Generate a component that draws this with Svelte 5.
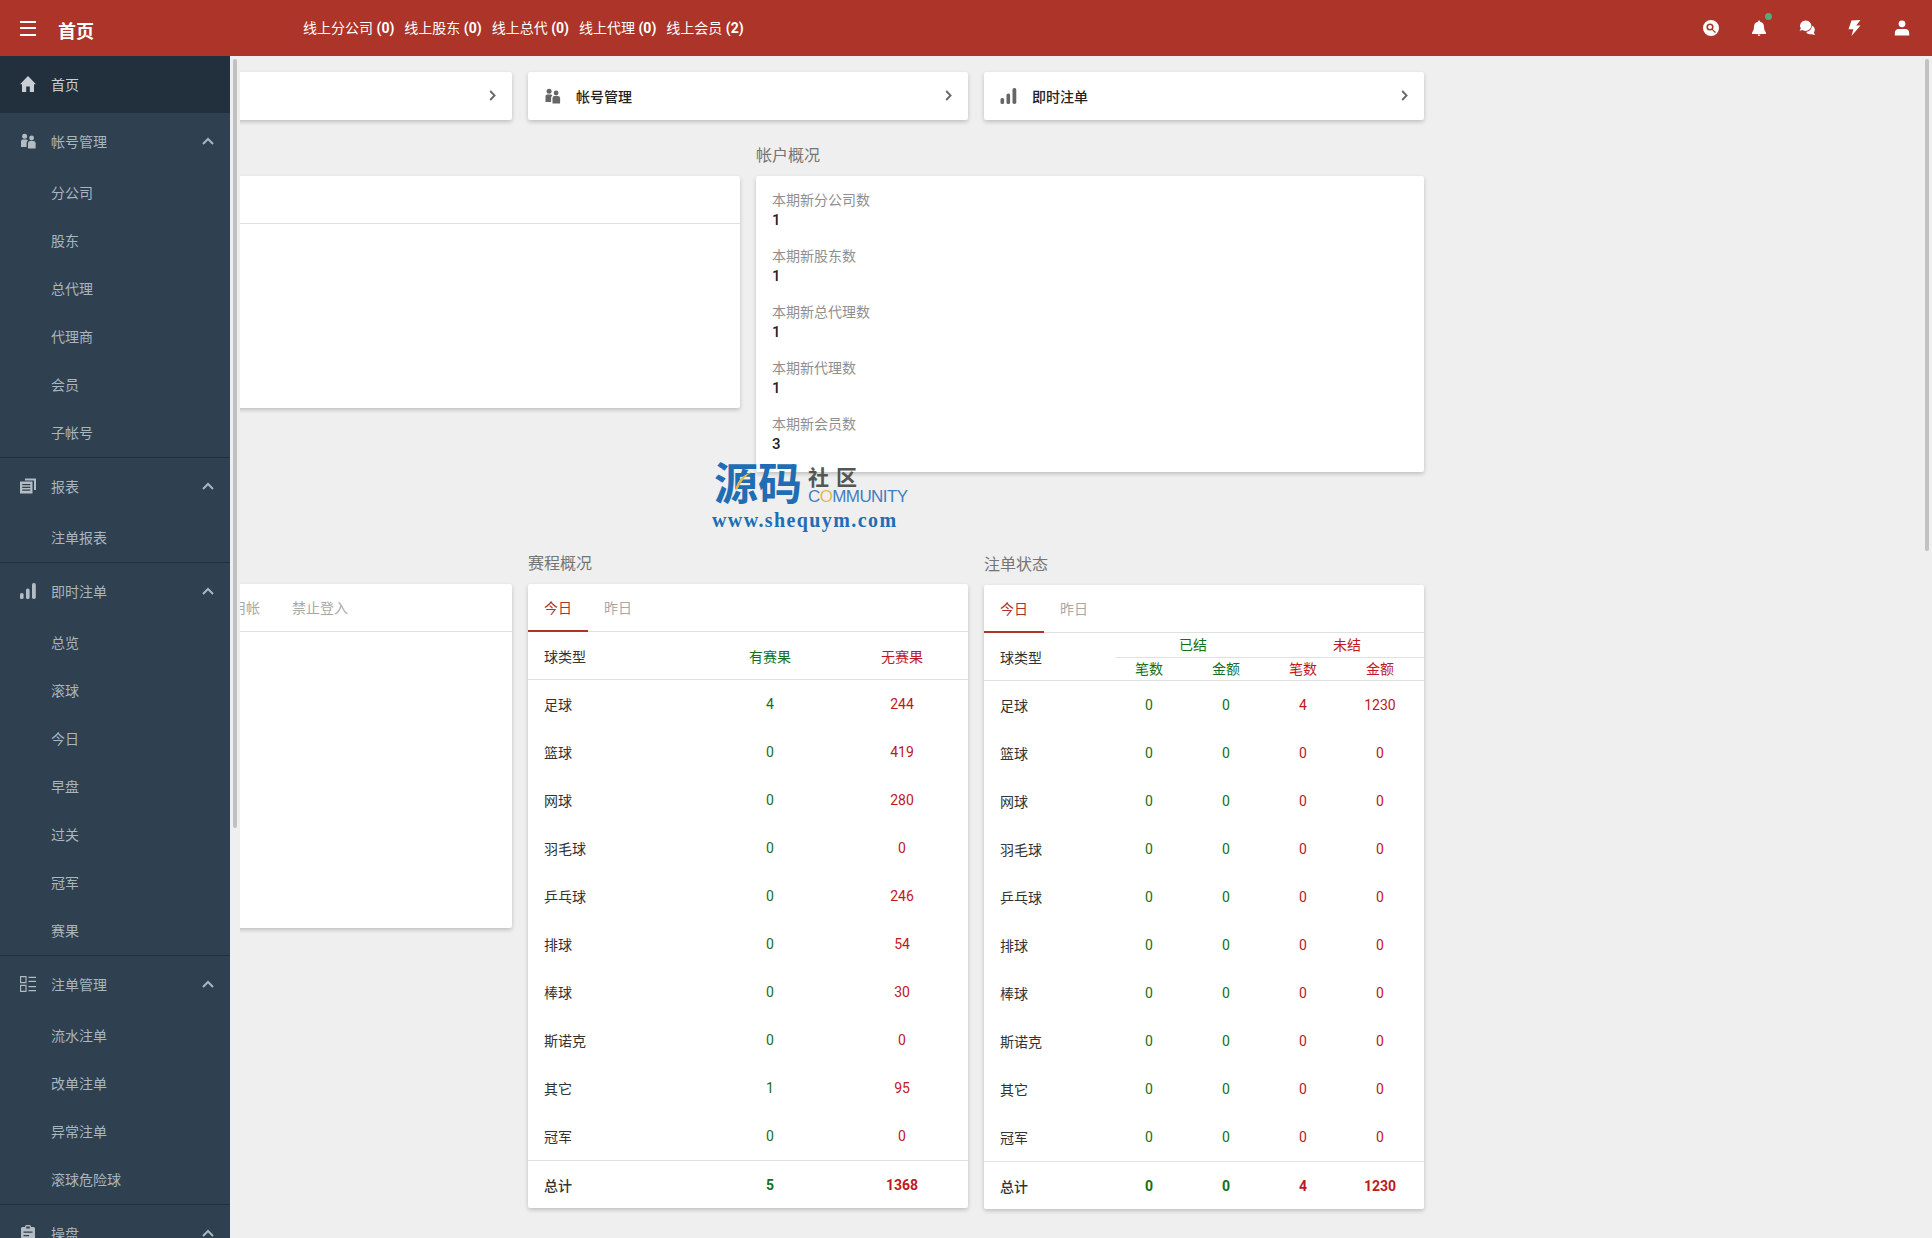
<script>
  const online = [
    { name: '线上分公司', n: 0 },
    { name: '线上股东', n: 0 },
    { name: '线上总代', n: 0 },
    { name: '线上代理', n: 0 },
    { name: '线上会员', n: 2 }
  ];

  const menu = [
    { name: '帐号管理', icon: 'users', subs: ['分公司', '股东', '总代理', '代理商', '会员', '子帐号'] },
    { name: '报表', icon: 'docs', subs: ['注单报表'] },
    { name: '即时注单', icon: 'bars', subs: ['总览', '滚球', '今日', '早盘', '过关', '冠军', '赛果'] },
    { name: '注单管理', icon: 'list', subs: ['流水注单', '改单注单', '异常注单', '滚球危险球'] },
    { name: '操盘', icon: 'clip', subs: [] }
  ];

  const stats = [
    { label: '本期新分公司数', value: 1 },
    { label: '本期新股东数', value: 1 },
    { label: '本期新总代理数', value: 1 },
    { label: '本期新代理数', value: 1 },
    { label: '本期新会员数', value: 3 }
  ];

  const games = [
    ['足球', 4, 244], ['篮球', 0, 419], ['网球', 0, 280], ['羽毛球', 0, 0], ['乒乓球', 0, 246],
    ['排球', 0, 54], ['棒球', 0, 30], ['斯诺克', 0, 0], ['其它', 1, 95], ['冠军', 0, 0]
  ];

  const bets = [
    ['足球', 0, 0, 4, 1230], ['篮球', 0, 0, 0, 0], ['网球', 0, 0, 0, 0], ['羽毛球', 0, 0, 0, 0], ['乒乓球', 0, 0, 0, 0],
    ['排球', 0, 0, 0, 0], ['棒球', 0, 0, 0, 0], ['斯诺克', 0, 0, 0, 0], ['其它', 0, 0, 0, 0], ['冠军', 0, 0, 0, 0]
  ];
</script>

{#snippet icon(name)}
  <svg class="icon" viewBox="0 0 16 16" fill="currentColor">
    {#if name === 'home'}
      <path d="M8 0 L16 8.2 H14 V16 H9.8 V10.5 H6.2 V16 H2 V8.2 H0 Z" />
    {:else if name === 'users'}
      <circle cx="4.6" cy="3.2" r="2.5" />
      <circle cx="11.6" cy="5" r="2.4" />
      <path d="M1 8.2 Q1 6.4 3 6.4 H6.2 Q7.6 6.4 7.9 7.6 Q6.6 8.4 6.6 10 V14 H1 Z" />
      <path d="M8 10.2 Q8 8 10 8 H13.2 Q15.6 8 15.6 10.2 V15.6 H8 Z" />
    {:else if name === 'docs'}
      <path d="M5 0.5 H16 V12 H14 V2.5 H5 Z" />
      <path fill-rule="evenodd" d="M0 3.5 H12.5 V15.5 H0 Z M2.2 6 V7.2 H10.3 V6 Z M2.2 8.8 V10 H10.3 V8.8 Z M2.2 11.6 V12.8 H10.3 V11.6 Z" />
    {:else if name === 'bars'}
      <rect x="0" y="10" width="3.6" height="6" rx="1.6" />
      <rect x="6" y="5.5" width="3.6" height="10.5" rx="1.6" />
      <rect x="12" y="0" width="3.8" height="16" rx="1.7" />
    {:else if name === 'list'}
      <path fill="none" stroke="currentColor" stroke-width="1.1" d="M0.6 0.6 H6 V6.6 H0.6 Z M0.6 9.4 H6 V15.4 H0.6 Z" />
      <path fill="none" stroke="currentColor" stroke-width="1.2" d="M8.5 1.4 H16 M8.5 5.4 H16 M8.5 10.6 H16 M8.5 14.6 H16" />
    {:else if name === 'clip'}
      <path fill-rule="evenodd" d="M5 1.5 Q5 0 6.5 0 H9.5 Q11 0 11 1.5 V2 H13.5 Q15 2 15 3.5 V16 H1 V3.5 Q1 2 2.5 2 H5 Z M6.2 1.6 V3.4 H9.8 V1.6 Z M3.5 6.5 V7.8 H12.5 V6.5 Z M3.5 10 V11.3 H9 V10 Z" />
    {:else if name === 'search'}
      <path fill-rule="evenodd" d="M8 0 A8 8 0 1 1 8 16 A8 8 0 1 1 8 0 Z M7 3.4 A3.6 3.6 0 1 0 7 10.6 A3.6 3.6 0 1 0 7 3.4 Z M7 5 A2 2 0 1 1 7 9 A2 2 0 1 1 7 5 Z M9.9 9.4 L9.2 10.2 L12 13 L13 12 Z" />
    {:else if name === 'bell'}
      <path d="M8 0.5 A1.2 1.2 0 0 1 9.2 1.7 Q13 2.6 13 7 Q13 11 15 12.8 V14 H1 V12.8 Q3 11 3 7 Q3 2.6 6.8 1.7 A1.2 1.2 0 0 1 8 0.5 Z M6.6 14.6 H9.4 Q9.4 16 8 16 Q6.6 16 6.6 14.6 Z" />
    {:else if name === 'chat'}
      <path d="M6.5 0.5 A5.6 5.2 0 1 1 3.6 10 L0.6 10.8 L1.8 8.4 A5.6 5.2 0 0 1 6.5 0.5 Z" />
      <path d="M13 5.8 A4.4 4.2 0 0 1 14.8 12.4 L16 15 L12.5 14.2 Q8.6 15 7 12 A7 7 0 0 0 13 5.8 Z" />
    {:else if name === 'bolt'}
      <path d="M5.5 0.5 L14.5 0 L10.2 5.5 L14.5 5.5 L5.5 16 L7.4 9.2 L2.5 9.2 Z" />
    {:else if name === 'user'}
      <circle cx="8" cy="3.8" r="3.4" />
      <path d="M0.8 15.5 V13.4 Q0.8 9 5 9 H11 Q15.2 9 15.2 13.4 V15.5 Z" />
    {/if}
  </svg>
{/snippet}

{#snippet chevron()}
  <svg class="chev" viewBox="0 0 7 11"><path d="M1.2 1 L5.6 5.5 L1.2 10" /></svg>
{/snippet}

<div class="app">
  <header class="topbar">
    <button class="burger" aria-label="menu"><i></i><i></i><i></i></button>
    <h1>首页</h1>
    <nav class="online">
      {#each online as o}
        <span>{o.name} <b>({o.n})</b></span>
      {/each}
    </nav>
    <div class="tools">
      <span class="tool">{@render icon('search')}</span>
      <span class="tool bell">{@render icon('bell')}<em></em></span>
      <span class="tool">{@render icon('chat')}</span>
      <span class="tool">{@render icon('bolt')}</span>
      <span class="tool">{@render icon('user')}</span>
    </div>
  </header>

  <div class="main">
    <aside class="side">
      <div class="side-menu">
        <a class="home">{@render icon('home')}<span>首页</span></a>
        {#each menu as m}
          <section class="group">
            <div class="group-head">
              {@render icon(m.icon)}
              <span>{m.name}</span>
              <svg class="up" viewBox="0 0 12 8"><path d="M1 7 L6 2 L11 7" /></svg>
            </div>
            {#each m.subs as s}
              <a class="sub">{s}</a>
            {/each}
          </section>
        {/each}
      </div>
      <div class="thumb side-thumb"></div>
    </aside>

    <div class="view">
      <div class="content">
        <div class="grid3">
          <div class="card link"><span class="lbl"></span>{@render chevron()}</div>
          <div class="card link"><span class="lk-icon">{@render icon('users')}</span><span class="lbl">帐号管理</span>{@render chevron()}</div>
          <div class="card link"><span class="lk-icon">{@render icon('bars')}</span><span class="lbl">即时注单</span>{@render chevron()}</div>
        </div>

        <div class="grid2">
          <div>
            <h2>&nbsp;</h2>
            <div class="card left-top"><div class="tabs"></div></div>
          </div>
          <div>
            <h2>帐户概况</h2>
            <div class="card account">
              {#each stats as s}
                <div class="stat">
                  <div class="stat-label">{s.label}</div>
                  <div class="stat-value">{s.value}</div>
                </div>
              {/each}
            </div>
          </div>
        </div>

        <div class="grid3 second">
          <div>
            <h2>&nbsp;</h2>
            <div class="card left-bottom">
              <div class="tabs shifted">
                <span class="tab">停用帐</span>
                <span class="tab">禁止登入</span>
              </div>
            </div>
          </div>

          <div>
            <h2>赛程概况</h2>
            <div class="card">
              <div class="tabs">
                <span class="tab on">今日</span>
                <span class="tab">昨日</span>
              </div>
              <div class="row games head">
                <span class="name">球类型</span>
                <span class="green">有赛果</span>
                <span class="red">无赛果</span>
              </div>
              {#each games as g}
                <div class="row games">
                  <span class="name">{g[0]}</span>
                  <span class="green">{g[1]}</span>
                  <span class="red">{g[2]}</span>
                </div>
              {/each}
              <div class="row games total">
                <span class="name">总计</span>
                <span class="green">5</span>
                <span class="red">1368</span>
              </div>
            </div>
          </div>

          <div class="nudge">
            <h2>注单状态</h2>
            <div class="card">
              <div class="tabs">
                <span class="tab on">今日</span>
                <span class="tab">昨日</span>
              </div>
              <div class="bet-head">
                <span class="name">球类型</span>
                <div class="bet-cols">
                  <div class="bet-top"><span class="green">已结</span><span class="red">未结</span></div>
                  <div class="bet-sub">
                    <span class="green">笔数</span><span class="green">金额</span>
                    <span class="red">笔数</span><span class="red">金额</span>
                  </div>
                </div>
              </div>
              {#each bets as b}
                <div class="row bets">
                  <span class="name">{b[0]}</span>
                  <span class="green">{b[1]}</span>
                  <span class="green">{b[2]}</span>
                  <span class="red">{b[3]}</span>
                  <span class="red">{b[4]}</span>
                </div>
              {/each}
              <div class="row bets total">
                <span class="name">总计</span>
                <span class="green">0</span>
                <span class="green">0</span>
                <span class="red">4</span>
                <span class="red">1230</span>
              </div>
            </div>
          </div>
        </div>
      </div>
      <div class="thumb page-thumb"></div>
    </div>
  </div>

  <!-- watermark pasted over the page -->
  <div class="mark">
    <div class="mark-top">
      <span class="mark-big">源码</span>
      <svg class="mark-arc" viewBox="0 0 40 40"><path d="M2 36 Q8 10 34 3 Q16 12 6 36" /></svg>
      <div class="mark-side">
        <span class="mark-cn">社区</span>
        <span class="mark-en">C<i>O</i>MMUNITY</span>
      </div>
    </div>
    <div class="mark-url">www.shequym.com</div>
  </div>
</div>

<style>
  :global(body) {
    margin: 0;
    background: #efefef;
    overflow: hidden;
  }

  .app {
    height: 100vh;
    display: flex;
    flex-direction: column;
    font-family: Roboto, "Noto Sans CJK SC", sans-serif;
    font-size: 14px;
    color: #333;
    overflow: hidden;
  }

  .topbar {
    flex: none;
    height: 56px;
    background: #ad3428;
    color: #fff;
    display: flex;
    align-items: center;
  }

  .burger {
    width: 16px;
    height: 15px;
    margin-left: 20px;
    padding: 0;
    border: 0;
    background: none;
    display: flex;
    flex-direction: column;
    justify-content: space-between;
  }

  .burger i {
    height: 2px;
    background: #fff;
  }

  h1 {
    margin: 8px 0 0 22px;
    font-size: 18px;
    line-height: 24px;
    font-weight: 700;
  }

  .online {
    margin-left: 209px;
    display: flex;
    gap: 10px;
    font-size: 14px;
    margin-top: -2px;
  }

  .online b {
    font-weight: 700;
  }

  .tools {
    margin-left: auto;
    margin-right: 22px;
    display: flex;
    gap: 31.75px;
  }

  .tool {
    width: 16px;
    height: 16px;
    position: relative;
    display: block;
  }

  .tool .icon {
    display: block;
    color: #fff;
  }

  .bell em {
    position: absolute;
    top: -7px;
    right: -5px;
    width: 7px;
    height: 7px;
    border-radius: 50%;
    background: #4caf7a;
  }

  .icon {
    width: 16px;
    height: 16px;
    flex: none;
  }

  .main {
    flex: 1;
    min-height: 0;
    display: flex;
  }

  .side {
    flex: none;
    width: 240px;
    display: flex;
    position: relative;
    background: #efefef;
  }

  .side-menu {
    width: 230px;
    background: #2f4050;
    color: #a9b6bf;
    overflow: hidden;
  }

  .thumb {
    position: absolute;
    width: 4px;
    background: #c1c1c1;
    border-radius: 2px;
  }

  .side-thumb {
    left: 233px;
    top: 3px;
    height: 769px;
  }

  .home {
    height: 55px;
    padding: 0 0 2px 20px;
    background: #222f3c;
    display: flex;
    align-items: center;
    gap: 15px;
    color: #c8ced3;
  }

  .group {
    border-bottom: 1px solid #22303d;
  }

  .group-head {
    height: 55px;
    padding: 0 0 1px 20px;
    display: flex;
    align-items: center;
    gap: 15px;
    position: relative;
  }

  .group-head .icon {
    color: #b4bcc3;
  }

  .up {
    position: absolute;
    right: 16px;
    top: 24px;
    width: 12px;
    height: 8px;
    fill: none;
    stroke: #a9b6bf;
    stroke-width: 2;
  }

  .sub {
    display: block;
    height: 48px;
    line-height: 48px;
    padding-left: 51px;
  }

  .view {
    flex: 1;
    min-width: 0;
    overflow: hidden;
    position: relative;
  }

  .page-thumb {
    right: 3px;
    top: 3px;
    height: 492px;
  }

  .content {
    margin-left: -168px;
    width: 1352px;
    padding-top: 16px;
  }

  .grid3 {
    display: grid;
    grid-template-columns: repeat(3, 440px);
    gap: 16px;
  }

  .grid2 {
    display: grid;
    grid-template-columns: repeat(2, 668px);
    gap: 16px;
    margin-top: 24px;
  }

  .second {
    margin-top: 80px;
  }

  .nudge {
    margin-top: 1px;
  }

  h2 {
    margin: 0 0 10px;
    padding-top: 1px;
    height: 21px;
    font-size: 16px;
    line-height: 22px;
    font-weight: 400;
    color: #757575;
  }

  .card {
    background: #fff;
    border-radius: 2px;
    box-shadow: 0 2px 4px rgba(0, 0, 0, 0.2);
  }

  .link {
    height: 47px;
    padding: 0 16px 1px;
    display: flex;
    align-items: center;
  }

  .lk-icon {
    color: #666;
    margin-right: 15px;
    display: flex;
  }

  .lk-icon .icon {
    width: 17px;
    height: 16px;
  }

  .lbl {
    flex: 1;
    color: #222;
    font-weight: 500;
  }

  .chev {
    width: 7px;
    height: 11px;
    fill: none;
    stroke: #666;
    stroke-width: 1.8;
  }

  .left-top {
    height: 232px;
  }

  .left-bottom {
    height: 344px;
  }

  .tabs {
    height: 47px;
    border-bottom: 1px solid #e0e0e0;
    display: flex;
  }

  .tabs.shifted {
    padding-left: 130px;
  }

  .tab {
    padding: 0 16px;
    line-height: 49px;
    height: 47px;
    box-sizing: border-box;
    color: #a8a8a8;
  }

  .tab.on {
    color: #ad3428;
    border-bottom: 2px solid #ad3428;
    height: 48px;
  }

  .row {
    display: grid;
    height: 48px;
    align-items: center;
    text-align: center;
  }

  .row .name,
  .bet-head .name {
    text-align: left;
    padding-left: 16px;
    color: #333;
  }

  .games {
    grid-template-columns: 176px 132px 132px;
  }

  .games.head {
    border-bottom: 1px solid #e0e0e0;
    box-sizing: border-box;
  }

  .bets {
    grid-template-columns: 132px repeat(4, 77px);
  }

  .bets span:not(.name) {
    padding-right: 11px;
  }

  .total {
    border-top: 1px solid #e0e0e0;
    box-sizing: border-box;
  }

  .total span {
    font-weight: 700;
  }

  .total .name {
    font-weight: 500;
  }

  .bet-head {
    height: 48px;
    box-sizing: border-box;
    display: flex;
    align-items: center;
    border-bottom: 1px solid #e0e0e0;
  }

  .bet-head .name {
    width: 100px;
    flex: none;
  }

  .bet-cols {
    width: 308px;
    margin-left: 16px;
    text-align: center;
  }

  .bet-top {
    height: 24px;
    line-height: 24px;
    display: grid;
    grid-template-columns: 1fr 1fr;
    border-bottom: 1px solid #e0e0e0;
  }

  .bet-sub {
    height: 22px;
    line-height: 23px;
    display: grid;
    grid-template-columns: repeat(4, 77px);
  }

  .bet-sub span {
    padding-right: 11px;
  }

  .green {
    color: #14701c;
  }

  .red {
    color: #c0181f;
  }

  .account {
    height: 296px;
    padding: 14px 16px 0;
    box-sizing: border-box;
  }

  .stat {
    height: 56px;
  }

  .stat-label {
    color: #8f8f8f;
    line-height: 20px;
  }

  .stat-value {
    color: #222;
    line-height: 20px;
    font-size: 15px;
    font-weight: 500;
  }

  .mark {
    position: absolute;
    left: 712px;
    top: 462px;
    width: 200px;
    pointer-events: none;
  }

  .mark-top {
    display: flex;
    align-items: flex-start;
    padding-left: 2px;
    position: relative;
    height: 44px;
  }

  .mark-big {
    font-size: 44px;
    line-height: 46px;
    color: #1f6db5;
    font-weight: 700;
  }

  .mark-arc {
    position: absolute;
    left: 22px;
    top: 6px;
    width: 22px;
    height: 26px;
    fill: #e6b84a;
  }

  .mark-side {
    margin-left: 6px;
    display: flex;
    flex-direction: column;
    padding-top: 5px;
  }

  .mark-cn {
    font-size: 21px;
    line-height: 23px;
    letter-spacing: 7px;
    font-weight: 700;
    color: #555;
    white-space: nowrap;
  }

  .mark-en {
    font-family: "Liberation Sans", sans-serif;
    font-size: 17px;
    line-height: 14px;
    letter-spacing: -0.6px;
    color: #3f7fbf;
    white-space: nowrap;
  }

  .mark-en i {
    font-style: normal;
    color: #e6b84a;
  }

  .mark-url {
    font-family: "Liberation Serif", serif;
    font-weight: 700;
    font-size: 20px;
    line-height: 20px;
    letter-spacing: 1.4px;
    color: #1f6db5;
    margin-top: 4px;
    white-space: nowrap;
  }
</style>
